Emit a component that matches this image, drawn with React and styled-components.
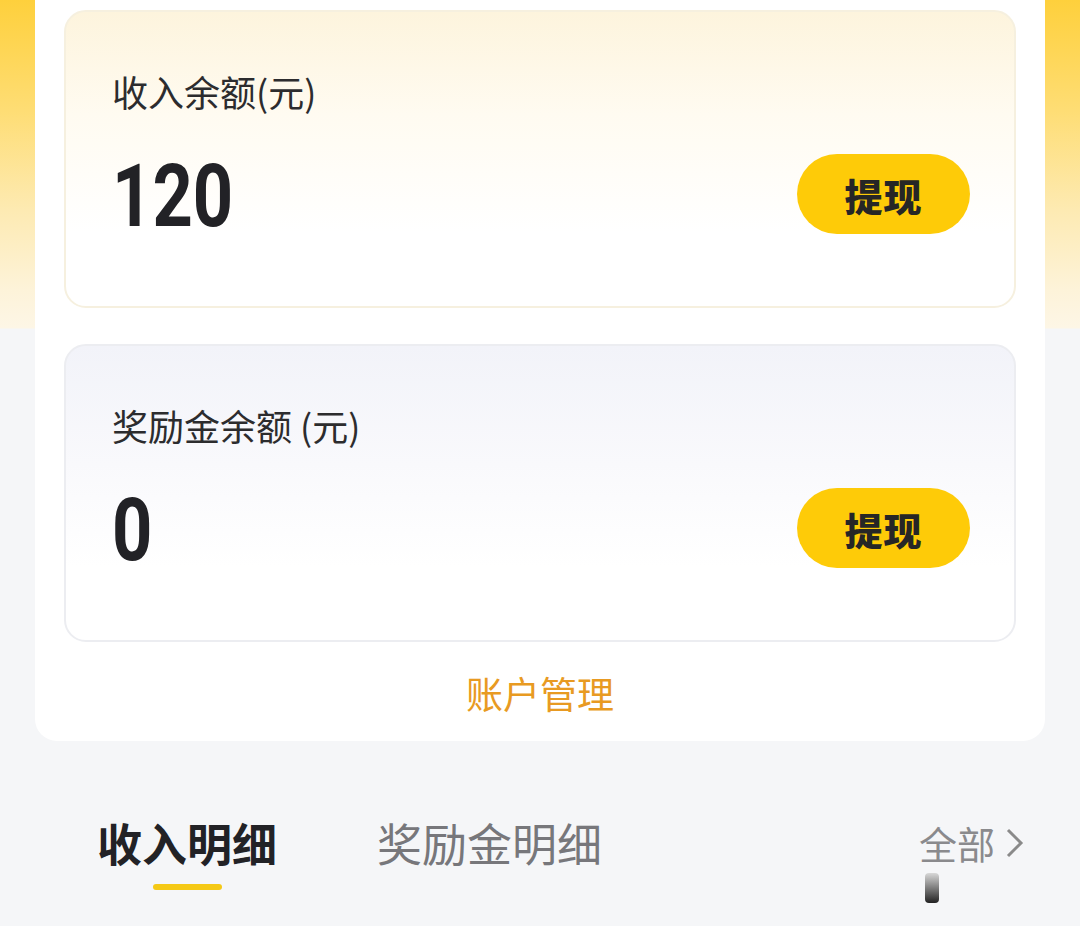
import React from 'react';
import styled, { createGlobalStyle } from 'styled-components';

const GlobalStyle = createGlobalStyle`
  html, body {
    margin: 0;
    padding: 0;
    background: #f5f6f8;
  }
  body {
    font-family: "Noto Sans CJK SC", "Noto Sans", sans-serif;
  }
`;

const balances = [
  { label: '收入余额(元)', amount: '120', tone: 'warm' },
  { label: '奖励金余额 (元)', amount: '0', tone: 'cool' },
];

const App = () => {
  return (
    <Page>
      <GlobalStyle />
      <Panel>
        {balances.map((b) => (
          <Card key={b.label} tone={b.tone}>
            <Label>{b.label}</Label>
            <Row>
              <Amount>{b.amount}</Amount>
              <WithdrawButton>提现</WithdrawButton>
            </Row>
          </Card>
        ))}
        <ManageLink>账户管理</ManageLink>
      </Panel>

      <Tabs>
        <Tab active>
          收入明细
          <Underline />
        </Tab>
        <Tab>奖励金明细</Tab>
        <AllLink>
          全部
          <svg width="22" height="34" viewBox="0 0 22 34">
            <polyline points="5,4 18,17 5,30" fill="none" stroke="#8a8a8a" strokeWidth="3" />
          </svg>
        </AllLink>
        <Smudge />
      </Tabs>
    </Page>
  );
};

export default App;

const Page = styled.div`
  width: 1080px;
  height: 926px;
  overflow: hidden;
  background: linear-gradient(
    to bottom,
    #fed03c 0px,
    #fedd74 110px,
    #fdeab2 210px,
    #fdf3d9 290px,
    #fdf6e6 328px,
    #f5f6f8 329px
  );
`;

const Panel = styled.div`
  margin: 0 35px;
  padding: 10px 29px 26px;
  background: #fff;
  border-radius: 0 0 22px 22px;
  display: flex;
  flex-direction: column;
  gap: 36px;
`;

const Card = styled.div`
  height: 298px;
  box-sizing: border-box;
  padding: 59px 44px 0 46px;
  border-radius: 22px;
  border: 2px solid ${(p) => (p.tone === 'warm' ? '#f6f0df' : '#ecedf1')};
  background: ${(p) =>
    p.tone === 'warm'
      ? 'linear-gradient(to bottom, #fdf4dd 0%, #fffbf1 35%, #ffffff 75%)'
      : 'linear-gradient(to bottom, #f2f3f9 0%, #f9f9fc 40%, #ffffff 75%)'};
  display: flex;
  flex-direction: column;
`;

const Label = styled.div`
  font-size: 36px;
  line-height: 40px;
  color: #2c2c2e;
`;

const Row = styled.div`
  margin-top: 43px;
  height: 80px;
  display: flex;
  align-items: center;
  justify-content: space-between;
`;

const Amount = styled.div`
  font-family: Roboto, "DejaVu Sans Condensed", sans-serif;
  font-weight: 700;
  font-size: 88px;
  line-height: 80px;
  color: #222226;
  transform: scaleX(0.8);
  transform-origin: left center;
  padding-top: 4px;
`;

const WithdrawButton = styled.button`
  width: 173px;
  height: 80px;
  border: none;
  border-radius: 40px;
  background: #fecb08;
  color: #262626;
  font-family: "Noto Sans CJK SC", sans-serif;
  font-weight: 900;
  font-size: 38px;
  letter-spacing: 1px;
  cursor: pointer;
`;

const ManageLink = styled.div`
  margin-top: -7px;
  text-align: center;
  font-size: 37px;
  line-height: 44px;
  color: #e89a22;
`;

const Tabs = styled.div`
  position: relative;
  margin-top: 74px;
  padding: 0 55px 0 97px;
  display: flex;
  align-items: center;
  gap: 100px;
  height: 56px;
`;

const Tab = styled.div`
  position: relative;
  font-size: 45px;
  line-height: 56px;
  font-weight: ${(p) => (p.active ? 700 : 400)};
  color: ${(p) => (p.active ? '#222226' : '#77777b')};
`;

const Underline = styled.div`
  position: absolute;
  left: 50%;
  bottom: -19px;
  width: 69px;
  height: 6px;
  margin-left: -34px;
  border-radius: 3px;
  background: #f5c916;
`;

const AllLink = styled.div`
  margin-left: auto;
  display: flex;
  align-items: center;
  gap: 8px;
  font-size: 38px;
  line-height: 56px;
  color: #8a8a8d;
`;

const Smudge = styled.div`
  position: absolute;
  left: 925px;
  top: 58px;
  width: 14px;
  height: 30px;
  border-radius: 4px;
  background: linear-gradient(to bottom, #d8d8d8, #222);
`;
